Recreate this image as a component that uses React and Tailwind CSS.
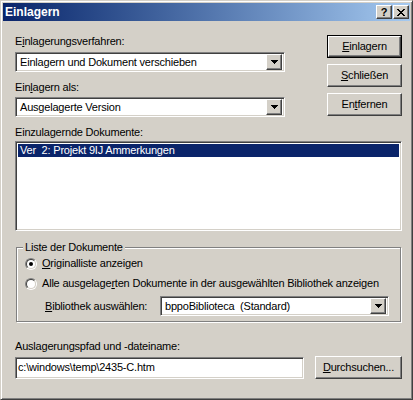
import React from "react";

const raised =
  "border border-t-white border-l-white border-r-[#404040] border-b-[#404040] shadow-[inset_-1px_-1px_#808080]";
const sunken =
  "border border-t-[#808080] border-l-[#808080] border-r-white border-b-white shadow-[inset_1px_1px_#404040,inset_-1px_-1px_#d4d0c8]";

// access key underline
function Key({ children }) {
  return <span className="underline underline-offset-[1px]">{children}</span>;
}

function Button({ children, wide, isDefault }) {
  const inner = (
    <div
      className={`${raised} h-full w-full flex items-center justify-center bg-[#d4d0c8]`}
    >
      {children}
    </div>
  );
  if (isDefault) {
    return (
      <div className={`border border-black h-[23px] ${wide || "w-[75px]"}`}>
        {inner}
      </div>
    );
  }
  return <div className={`h-[23px] ${wide || "w-[75px]"}`}>{inner}</div>;
}

function Arrow() {
  return (
    <svg width="7" height="4" viewBox="0 0 7 4" shapeRendering="crispEdges">
      <rect x="0" y="0" width="7" height="1" fill="#000" />
      <rect x="1" y="1" width="5" height="1" fill="#000" />
      <rect x="2" y="2" width="3" height="1" fill="#000" />
      <rect x="3" y="3" width="1" height="1" fill="#000" />
    </svg>
  );
}

function Combo({ value, className }) {
  return (
    <div className={`${sunken} bg-white h-[20px] flex items-center p-[2px] ${className}`}>
      <span className="flex-1 pl-[2px] whitespace-pre leading-[13px]">{value}</span>
      <div className={`${raised} bg-[#d4d0c8] w-[16px] h-[16px] flex items-center justify-center`}>
        <Arrow />
      </div>
    </div>
  );
}

function Radio({ checked }) {
  return (
    <div className="w-[12px] h-[12px] shrink-0 rounded-full border border-t-[#808080] border-l-[#808080] border-r-white border-b-white">
      <div className="w-full h-full rounded-full bg-white border border-t-[#404040] border-l-[#404040] border-r-[#d4d0c8] border-b-[#d4d0c8] flex items-center justify-center">
        {checked && <div className="w-[4px] h-[4px] rounded-full bg-black" />}
      </div>
    </div>
  );
}

function CloseGlyph() {
  const rows = ["11....11", ".11..11.", "..1111..", "...11...", "..1111..", ".11..11.", "11....11"];
  return (
    <svg width="8" height="7" viewBox="0 0 8 7" shapeRendering="crispEdges">
      {rows.map((r, y) =>
        r.split("").map((c, x) =>
          c === "1" ? <rect key={`${x}-${y}`} x={x} y={y} width="1" height="1" fill="#000" /> : null
        )
      )}
    </svg>
  );
}

export default function App() {
  return (
    <div className="w-[413px] h-[400px] bg-[#d4d0c8] border border-t-[#d4d0c8] border-l-[#d4d0c8] border-r-[#404040] border-b-[#404040] shadow-[inset_1px_1px_white,inset_-1px_-1px_#808080] p-[2px] text-[11px] leading-[13px] tracking-[-0.2px] whitespace-nowrap text-black font-['Liberation_Sans',Arial,sans-serif] flex flex-col">
      {/* title bar */}
      <div className="h-[18px] flex items-center pl-[2px] pr-[1px] bg-gradient-to-r from-[#0a246a] to-[#a6caf0]">
        <span className="flex-1 text-white font-bold text-[12px] tracking-normal">Einlagern</span>
        <div className={`${raised} bg-[#d4d0c8] w-[16px] h-[14px] flex items-center justify-center font-bold text-[11px] leading-none`}>
          ?
        </div>
        <div className={`${raised} bg-[#d4d0c8] w-[16px] h-[14px] ml-px flex items-center justify-center`}>
          <CloseGlyph />
        </div>
      </div>

      {/* body */}
      <div className="flex flex-col pl-[12px] pr-[8px] pt-[14px]">
        <div className="flex">
          <div className="w-[270px] flex flex-col">
            <div>
              E<Key>i</Key>nlagerungsverfahren:
            </div>
            <Combo value="Einlagern und Dokument verschieben" className="mt-[4px]" />
            <div className="mt-[9px]">
              Ein<Key>l</Key>agern als:
            </div>
            <Combo value="Ausgelagerte Version" className="mt-[3px]" />
          </div>
          <div className="ml-auto flex flex-col gap-[6px]">
            <Button isDefault>
              <span>
                <Key>E</Key>inlagern
              </span>
            </Button>
            <Button>
              <span>
                <Key>S</Key>chließen
              </span>
            </Button>
            <Button>
              <span>
                En<Key>t</Key>fernen
              </span>
            </Button>
          </div>
        </div>

        <div className="mt-[9px]">Einzulagernde Dokumente:</div>
        <div className={`${sunken} bg-white h-[90px] mt-[2px] p-[2px]`}>
          <div className="bg-[#0a246a] text-white h-[13px] pl-[2px] whitespace-pre">
            {"Ver  2: Projekt 9IJ Ammerkungen"}
          </div>
        </div>

        {/* group box */}
        <div className="relative mt-[16px] mx-px h-[75px] border border-[#808080] shadow-[inset_1px_1px_white,1px_1px_white] pl-[8px] pr-[11px] pt-[9px] flex flex-col">
          <span className="absolute -top-[7px] left-[6px] px-[2px] bg-[#d4d0c8]">
            Liste der Dokumente
          </span>
          <div className="flex items-center gap-[5px] h-[13px]">
            <Radio checked />
            <span>
              <Key>O</Key>riginalliste anzeigen
            </span>
          </div>
          <div className="flex items-center gap-[5px] h-[13px] mt-[7px]">
            <Radio />
            <span>
              Alle ausgelage<Key>r</Key>ten Dokumente in der ausgewählten Bibliothek anzeigen
            </span>
          </div>
          <div className="flex items-center mt-[6px] pl-[20px]">
            <span>
              <Key>B</Key>ibliothek auswählen:
            </span>
            <Combo value="bppoBiblioteca  (Standard)" className="ml-auto w-[229px]" />
          </div>
        </div>

        <div className="mt-[18px]">Auslagerungspfad und -dateiname:</div>
        <div className="flex mt-[3px] items-center">
          <div className={`${sunken} bg-white w-[289px] h-[22px] flex items-center px-[2px]`}>
            c:\windows\temp\2435-C.htm
          </div>
          <div className="ml-auto">
            <Button wide="w-[87px]">
              <span>
                <Key>D</Key>urchsuchen...
              </span>
            </Button>
          </div>
        </div>
      </div>
    </div>
  );
}
